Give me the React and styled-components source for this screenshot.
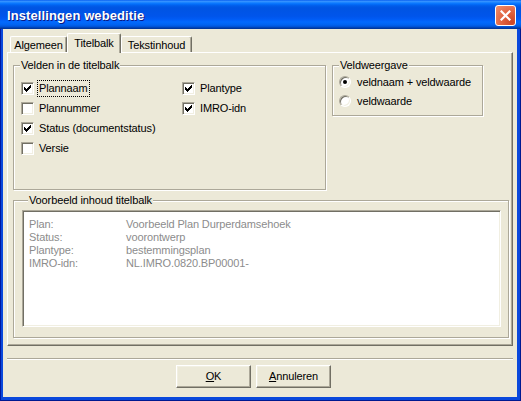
import React from "react";
import styled, { createGlobalStyle } from "styled-components";

const GlobalStyle = createGlobalStyle`
  html, body {
    margin: 0;
    padding: 0;
    background: #ffffff;
  }
  body {
    font-family: "Liberation Sans", Arial, sans-serif;
    font-size: 11px;
    letter-spacing: -0.12px;
    color: #000;
  }
`;

const CHECK_PIXELS = [
  [6, 0],
  [5, 1], [6, 1],
  [0, 2], [4, 2], [5, 2], [6, 2],
  [0, 3], [1, 3], [3, 3], [4, 3], [5, 3],
  [0, 4], [1, 4], [2, 4], [3, 4], [4, 4],
  [1, 5], [2, 5], [3, 5],
  [2, 6],
];

const Dialog = () => {
  return (
    <Window>
      <GlobalStyle />
      <TitleBar>
        <TitleText>Instellingen webeditie</TitleText>
        <CloseButton aria-label="Sluiten">
          <svg width="11" height="11" viewBox="0 0 11 11">
            <path d="M1.5 1.5 L9.5 9.5 M9.5 1.5 L1.5 9.5" stroke="#fff" strokeWidth="2.2" strokeLinecap="square" />
          </svg>
        </CloseButton>
      </TitleBar>

      <Frame>
        <Client>
          <TabStrip>
            <Tab $width={57}>Algemeen</Tab>
            <Tab $width={54} $active>Titelbalk</Tab>
            <Tab $width={71}>Tekstinhoud</Tab>
          </TabStrip>

          <Panel>
            <TopRow>
              <Group $width={313}>
                <Legend>Velden in de titelbalk</Legend>
                <CheckGrid>
                  <CheckColumn>
                    <CheckRow checked focused label="Plannaam" />
                    <CheckRow label="Plannummer" />
                    <CheckRow checked label="Status (documentstatus)" />
                    <CheckRow label="Versie" />
                  </CheckColumn>
                  <CheckColumn>
                    <CheckRow checked label="Plantype" />
                    <CheckRow checked label="IMRO-idn" />
                  </CheckColumn>
                </CheckGrid>
              </Group>

              <Group $width={151}>
                <Legend>Veldweergave</Legend>
                <RadioList>
                  <RadioRow>
                    <Radio $checked />
                    <span>veldnaam + veldwaarde</span>
                  </RadioRow>
                  <RadioRow>
                    <Radio />
                    <span>veldwaarde</span>
                  </RadioRow>
                </RadioList>
              </Group>
            </TopRow>

            <PreviewGroup>
              <Legend>Voorbeeld inhoud titelbalk</Legend>
              <PreviewBox>
                <PreviewLine><PreviewKey>Plan:</PreviewKey><span>Voorbeeld Plan Durperdamsehoek</span></PreviewLine>
                <PreviewLine><PreviewKey>Status:</PreviewKey><span>voorontwerp</span></PreviewLine>
                <PreviewLine><PreviewKey>Plantype:</PreviewKey><span>bestemmingsplan</span></PreviewLine>
                <PreviewLine><PreviewKey>IMRO-idn:</PreviewKey><span>NL.IMRO.0820.BP00001-</span></PreviewLine>
              </PreviewBox>
            </PreviewGroup>
          </Panel>

          <Separator />

          <ButtonBar>
            <Button><u>O</u>K</Button>
            <Button><u>A</u>nnuleren</Button>
          </ButtonBar>
        </Client>
      </Frame>
    </Window>
  );
};

const CheckRow = ({ checked, focused, label }) => (
  <CheckItem>
    <CheckBox>
      {checked && (
        <svg width="7" height="7" viewBox="0 0 7 7" shapeRendering="crispEdges">
          {CHECK_PIXELS.map(([x, y]) => (
            <rect key={`${x}-${y}`} x={x} y={y} width="1" height="1" fill="#000" />
          ))}
        </svg>
      )}
    </CheckBox>
    <CheckLabel $focused={focused}>{label}</CheckLabel>
  </CheckItem>
);

const Window = styled.div`
  width: 521px;
  height: 401px;
  display: flex;
  flex-direction: column;
  overflow: hidden;
`;

const TitleBar = styled.div`
  height: 29px;
  flex: 0 0 29px;
  display: flex;
  align-items: center;
  justify-content: space-between;
  padding: 2px 5px 0 7px;
  box-sizing: border-box;
  background: linear-gradient(
    180deg,
    #0058ee 0%,
    #3a93ff 4%,
    #288eff 7%,
    #127dff 10%,
    #036ffc 14%,
    #0262ee 18%,
    #0057e5 24%,
    #0054e3 30%,
    #0055eb 56%,
    #005bf5 66%,
    #026afe 76%,
    #0062ef 86%,
    #0052d6 92%,
    #0040ab 96%,
    #003092 100%
  );
`;

const TitleText = styled.span`
  color: #fff;
  font-family: "Liberation Sans", Arial, sans-serif;
  font-weight: bold;
  font-size: 13px;
  letter-spacing: 0.1px;
  text-shadow: 1px 1px 0 #0a1883;
  margin-top: -1px;
`;

const CloseButton = styled.div`
  width: 21px;
  height: 21px;
  box-sizing: border-box;
  border: 1px solid #fff;
  border-radius: 3px;
  display: flex;
  align-items: center;
  justify-content: center;
  margin-top: -1px;
  background: radial-gradient(circle at 85% 85%, #cc4626 0%, #e0623f 45%, #f0906e 100%);
`;

const Frame = styled.div`
  flex: 1;
  display: flex;
  padding: 0 4px 4px 3px;
  background: #0a48dc;
  box-shadow: inset 1px 0 0 #0019a0, inset -1px 0 0 #001890, inset 0 -1px 0 #001890;
`;

const Client = styled.div`
  flex: 1;
  display: flex;
  flex-direction: column;
  background: #ece9d8;
`;

const TabStrip = styled.div`
  position: relative;
  z-index: 1;
  display: flex;
  align-items: flex-end;
  height: 20px;
  margin-top: 4px;
  margin-bottom: -1px;
  padding-left: 7px;
`;

const Tab = styled.div`
  width: ${(p) => p.$width}px;
  height: ${(p) => (p.$active ? 20 : 16)}px;
  margin-bottom: ${(p) => (p.$active ? 0 : 1)}px;
  box-sizing: border-box;
  display: flex;
  justify-content: center;
  padding-top: ${(p) => (p.$active ? 3 : 2)}px;
  background: #ece9d8;
  border: 1px solid #fff;
  border-right-color: #716f64;
  border-bottom: none;
  border-radius: 2px 2px 0 0;
  box-shadow: inset -1px 0 0 #aca899;
  line-height: 13px;
`;

const Panel = styled.div`
  height: 294px;
  box-sizing: border-box;
  margin: 0 4px;
  padding: 6px 3px 0 5px;
  border: 1px solid;
  border-color: #fff #716f64 #716f64 #fff;
  box-shadow: inset -1px -1px 0 #aca899;
  display: flex;
  flex-direction: column;
`;

const TopRow = styled.div`
  display: flex;
  align-items: flex-start;
  gap: 6px;
`;

const Group = styled.fieldset`
  width: ${(p) => p.$width}px;
  box-sizing: border-box;
  margin: 0;
  padding: 0;
  min-width: 0;
  border: 1px solid #aca899;
  box-shadow: inset 1px 1px 0 #fff, 1px 1px 0 #fff;
`;

const Legend = styled.legend`
  margin-left: 6px;
  padding: 0 1px;
  line-height: 13px;
  background: #ece9d8;
`;

const CheckGrid = styled.div`
  display: grid;
  grid-template-columns: 161px 1fr;
  padding: 6px 0 31px 7px;
`;

const CheckColumn = styled.div`
  display: flex;
  flex-direction: column;
`;

const CheckItem = styled.div`
  height: 20px;
  display: flex;
  align-items: center;
  gap: 3px;
`;

const CheckBox = styled.span`
  width: 13px;
  height: 13px;
  box-sizing: border-box;
  flex: 0 0 13px;
  border: 1px solid;
  border-color: #aca899 #fff #fff #aca899;
  box-shadow: inset 1px 1px 0 #716f64, inset -1px -1px 0 #f1efe2;
  background: #fff;
  display: flex;
  align-items: flex-start;
  justify-content: flex-start;
  padding: 2px 0 0 2px;
`;

const CheckLabel = styled.span`
  padding: 1px 1px;
  line-height: 13px;
  border: 1px dotted ${(p) => (p.$focused ? "#000" : "transparent")};
`;

const RadioList = styled.div`
  display: flex;
  flex-direction: column;
  padding: 0 0 5px 6px;
`;

const RadioRow = styled.div`
  height: 19px;
  display: flex;
  align-items: center;
  gap: 6px;
`;

const Radio = styled.span`
  position: relative;
  width: 12px;
  height: 12px;
  box-sizing: border-box;
  border-radius: 50%;
  border: 1px solid;
  border-color: #aca899 #fff #fff #aca899;
  box-shadow: inset 1px 1px 0 #716f64, inset -1px -1px 0 #f1efe2;
  background: #fff;

  &::after {
    content: "";
    display: ${(p) => (p.$checked ? "block" : "none")};
    position: absolute;
    left: 3px;
    top: 3px;
    width: 4px;
    height: 4px;
    border-radius: 50%;
    background: #000;
  }
`;

const PreviewGroup = styled(Group)`
  width: auto;
  margin-top: 4px;
  padding: 3px 7px 10px 8px;
`;

const PreviewBox = styled.div`
  height: 117px;
  box-sizing: border-box;
  background: #fff;
  border: 1px solid;
  border-color: #aca899 #fff #fff #aca899;
  box-shadow: inset 1px 1px 0 #716f64, inset -1px -1px 0 #f1efe2;
  padding: 7px 6px 0 6px;
  color: #8c8c8c;
`;

const PreviewLine = styled.div`
  display: flex;
  line-height: 13px;
`;

const PreviewKey = styled.span`
  width: 97px;
  flex: 0 0 97px;
`;

const Separator = styled.div`
  height: 1px;
  margin: 12px 4px 0;
  background: #aca899;
  border-bottom: 1px solid #fff;
`;

const ButtonBar = styled.div`
  display: flex;
  justify-content: center;
  gap: 5px;
  padding-right: 13px;
  margin-top: 5px;
`;

const Button = styled.div`
  width: 75px;
  height: 23px;
  box-sizing: border-box;
  display: flex;
  align-items: center;
  justify-content: center;
  background: #ece9d8;
  border: 1px solid;
  border-color: #fff #716f64 #716f64 #fff;
  box-shadow: inset -1px -1px 0 #aca899, inset 1px 1px 0 #f1efe2;
  line-height: 13px;

  u {
    text-decoration-thickness: 1px;
    text-underline-offset: 1px;
  }
`;

export default Dialog;
